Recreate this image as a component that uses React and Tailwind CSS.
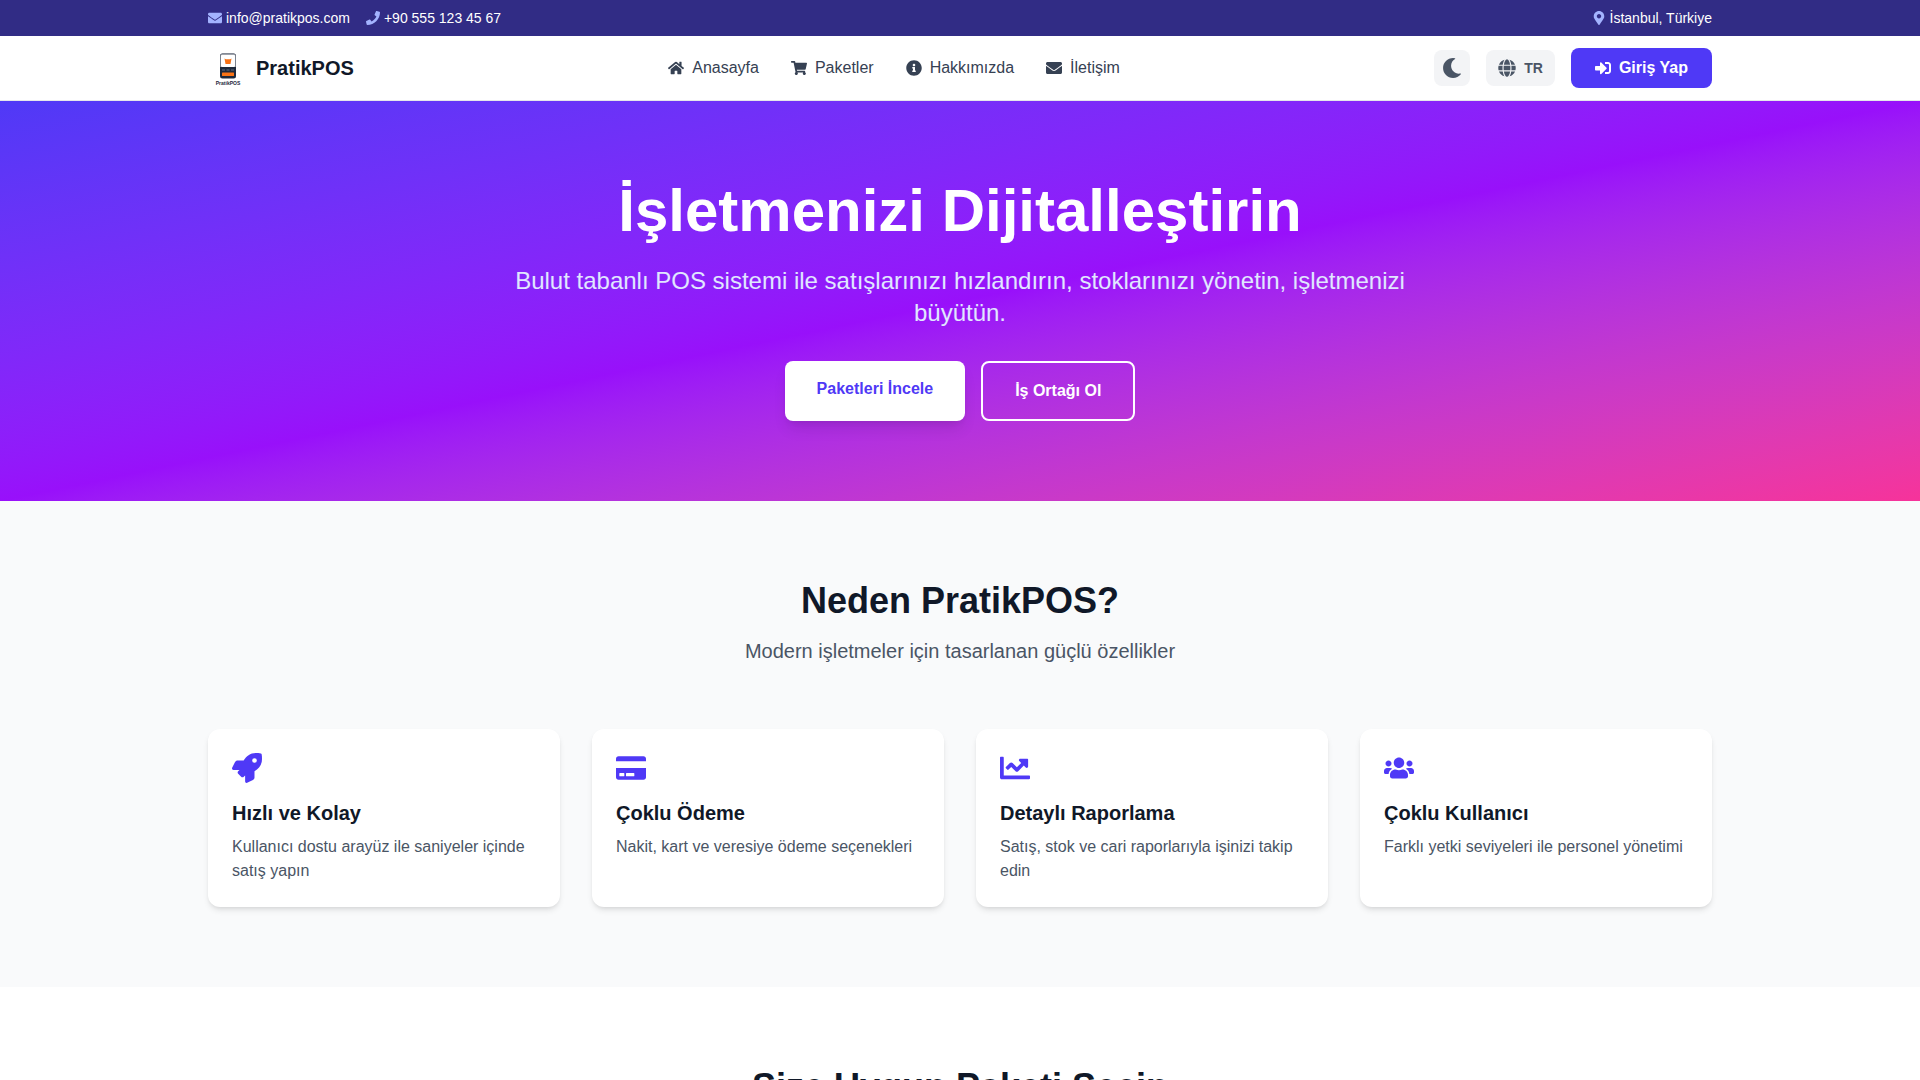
import React from "react";
import {
  FaChartLine,
  FaCreditCard,
  FaEnvelope,
  FaGlobe,
  FaHome,
  FaInfoCircle,
  FaMapMarkerAlt,
  FaMoon,
  FaPhone,
  FaRocket,
  FaShoppingCart,
  FaSignInAlt,
  FaUsers,
} from "react-icons/fa";

const navLinks = [
  { label: "Anasayfa", href: "#anasayfa", Icon: FaHome },
  { label: "Paketler", href: "#paketler", Icon: FaShoppingCart },
  { label: "Hakkımızda", href: "#hakkimizda", Icon: FaInfoCircle },
  { label: "İletişim", href: "#iletisim", Icon: FaEnvelope },
];

const features = [
  { title: "Hızlı ve Kolay", text: "Kullanıcı dostu arayüz ile saniyeler içinde satış yapın", Icon: FaRocket },
  { title: "Çoklu Ödeme", text: "Nakit, kart ve veresiye ödeme seçenekleri", Icon: FaCreditCard },
  { title: "Detaylı Raporlama", text: "Satış, stok ve cari raporlarıyla işinizi takip edin", Icon: FaChartLine },
  { title: "Çoklu Kullanıcı", text: "Farklı yetki seviyeleri ile personel yönetimi", Icon: FaUsers },
];

function Logo() {
  return (
    <svg viewBox="0 0 40 40" className="size-10" role="img" aria-label="PratikPOS">
      <rect x="12" y="5.5" width="16" height="25" rx="2.5" fill="#1e293b" />
      <path d="M14.5 5.5h11A2.5 2.5 0 0 1 28 8v11H12V8a2.500 2.500 0 0 1 2.500-2.500z" fill="#7b828e" />
      <rect x="13" y="6.800" width="14" height="12.200" rx="1" fill="#ffffff" />
      <path d="M16.500 10.500l1.400.8h4.200l1.400-.8-1 5.500h-5z" fill="#f97316" />
      <path d="M14 21h3v2h-3zM18.500 21h3v2h-3zM23 21h3v2h-3z" fill="#3d4a5e" />
      <rect x="14" y="24.500" width="12" height="3.500" rx="0.500" fill="#f97316" />
      <text
        x="20"
        y="36.500"
        textAnchor="middle"
        fontSize="5"
        fontWeight="700"
        fill="#1e293b"
      >
        PratikPOS
      </text>
    </svg>
  );
}

function TopBar() {
  return (
    <div className="bg-indigo-900 py-2 text-sm text-white">
      <div className="mx-auto flex max-w-screen-2xl items-center justify-between px-4">
        <div className="flex items-center gap-4">
          <a href="mailto:info@pratikpos.com" className="flex items-center gap-1">
            <FaEnvelope className="text-indigo-300" />
            info@pratikpos.com
          </a>
          <a href="tel:+905551234567" className="flex items-center gap-1">
            <FaPhone className="text-indigo-300" />
            +90 555 123 45 67
          </a>
        </div>
        <div className="flex items-center gap-1">
          <FaMapMarkerAlt className="text-indigo-300" />
          İstanbul, Türkiye
        </div>
      </div>
    </div>
  );
}

function Header() {
  return (
    <header className="border-b border-gray-200 bg-white">
      <div className="mx-auto flex h-16 max-w-screen-2xl items-center justify-between px-4">
        <a href="#anasayfa" className="flex items-center gap-2 text-xl font-bold text-gray-900">
          <Logo />
          PratikPOS
        </a>
        <nav className="flex items-center gap-8">
          {navLinks.map(({ label, href, Icon }) => (
            <a key={label} href={href} className="flex items-center gap-2 text-gray-700">
              <Icon />
              {label}
            </a>
          ))}
        </nav>
        <div className="flex items-center gap-4">
          <button type="button" aria-label="Koyu tema" className="rounded-lg bg-gray-100 p-2 text-gray-600">
            <FaMoon className="size-5" />
          </button>
          <button
            type="button"
            className="flex h-9 items-center gap-2 rounded-lg bg-gray-100 px-3 text-sm font-bold text-gray-600"
          >
            <FaGlobe className="size-[18px]" />
            TR
          </button>
          <button
            type="button"
            className="flex h-10 items-center gap-2 rounded-lg bg-indigo-600 px-6 font-semibold text-white"
          >
            <FaSignInAlt />
            Giriş Yap
          </button>
        </div>
      </div>
    </header>
  );
}

function Hero() {
  return (
    <section className="bg-linear-to-br from-indigo-600 via-purple-600 to-pink-500 px-4 py-20 text-center text-white">
      <div className="mx-auto max-w-4xl">
        <h1 className="mb-6 text-6xl font-bold">İşletmenizi Dijitalleştirin</h1>
        <p className="mb-8 text-2xl text-indigo-100">
          Bulut tabanlı POS sistemi ile satışlarınızı hızlandırın, stoklarınızı yönetin, işletmenizi büyütün.
        </p>
        <div className="flex justify-center gap-4">
          <a href="#paketler" className="rounded-lg bg-white px-8 py-4 font-bold text-indigo-600 shadow-lg">
            Paketleri İncele
          </a>
          <a href="#ortaklik" className="rounded-lg border-2 border-white px-8 py-4 font-bold text-white">
            İş Ortağı Ol
          </a>
        </div>
      </div>
    </section>
  );
}

function Features() {
  return (
    <section className="bg-gray-50 py-20">
      <div className="mx-auto max-w-screen-2xl px-4">
        <div className="mb-16 text-center">
          <h2 className="mb-4 text-4xl font-bold text-gray-900">Neden PratikPOS?</h2>
          <p className="text-xl text-gray-600">Modern işletmeler için tasarlanan güçlü özellikler</p>
        </div>
        <div className="grid grid-cols-1 gap-8 md:grid-cols-2 lg:grid-cols-4">
          {features.map(({ title, text, Icon }) => (
            <article key={title} className="rounded-xl bg-white p-6 shadow-md">
              <Icon className="mb-4 size-[30px] text-indigo-600" />
              <h3 className="mb-2 text-xl font-bold text-gray-900">{title}</h3>
              <p className="text-gray-600">{text}</p>
            </article>
          ))}
        </div>
      </div>
    </section>
  );
}

function Packages() {
  return (
    <section id="paketler" className="bg-white py-20 text-center">
      <h2 className="text-4xl font-bold text-gray-900">Size Uygun Paketi Seçin</h2>
    </section>
  );
}

export default function App() {
  return (
    <div className="min-h-screen bg-white font-['Liberation_Sans',Arial,sans-serif]">
      <TopBar />
      <Header />
      <main>
        <Hero />
        <Features />
        <Packages />
      </main>
    </div>
  );
}
